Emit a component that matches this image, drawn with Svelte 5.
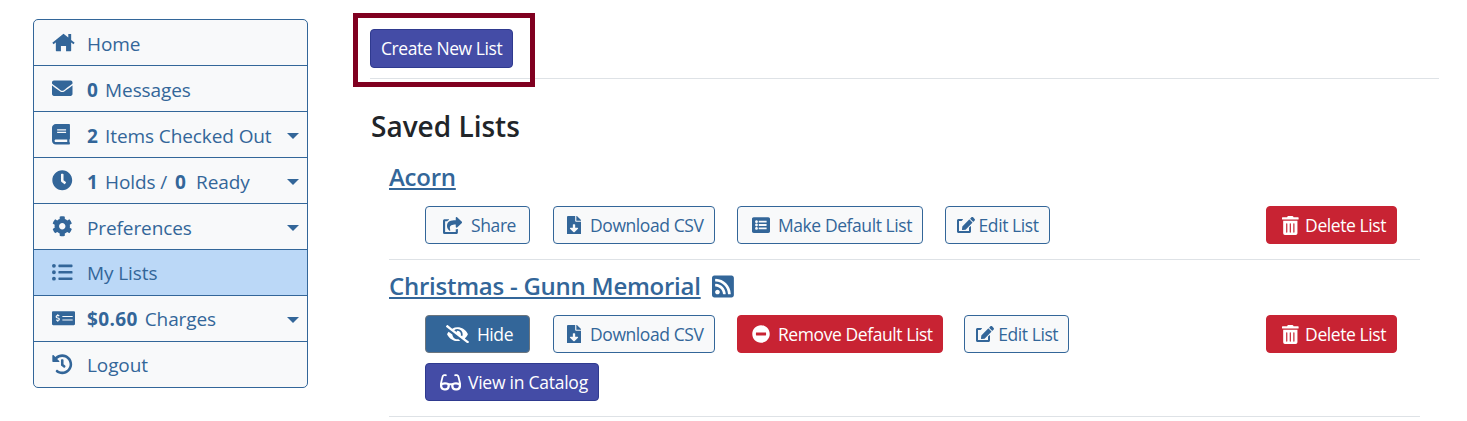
<script>
  const icons = {
    home: [576, 'M288 40L8 270l32 36L288 100l248 206 32-36-88-72V50h-72v88zM288 100L96 258v206a16 16 0 0 0 16 16h112V352h128v128h112a16 16 0 0 0 16-16V258z'],
    envelope: [512, 'M502.3 190.8c3.9-3.1 9.7-.2 9.7 4.7V400c0 26.5-21.5 48-48 48H48c-26.5 0-48-21.5-48-48V195.6c0-5 5.7-7.8 9.7-4.7 22.4 17.4 52.1 39.5 154.1 113.6 21.1 15.4 56.7 47.8 92.2 47.6 35.7.3 72-32.8 92.3-47.6 102-74.1 131.6-96.3 154-113.7zM256 320c23.2.4 56.6-29.2 73.4-41.4 132.7-96.3 142.8-104.7 173.4-128.7 5.8-4.5 9.2-11.5 9.2-18.9v-19c0-26.5-21.5-48-48-48H48C21.5 64 0 85.5 0 112v19c0 7.4 3.4 14.3 9.2 18.9 30.6 23.9 40.7 32.4 173.4 128.7 16.8 12.2 50.2 41.8 73.4 41.4z'],
    book: [448, 'M448 360V24c0-13.3-10.7-24-24-24H96C43 0 0 43 0 96v320c0 53 43 96 96 96h328c13.3 0 24-10.7 24-24v-16c0-7.5-3.5-14.3-8.9-18.7-4.2-15.4-4.2-59.3 0-74.7 5.4-4.3 8.9-11.1 8.9-18.6zM128 134c0-3.3 2.7-6 6-6h212c3.3 0 6 2.7 6 6v20c0 3.3-2.7 6-6 6H134c-3.3 0-6-2.7-6-6v-20zm0 64c0-3.3 2.7-6 6-6h212c3.3 0 6 2.7 6 6v20c0 3.3-2.7 6-6 6H134c-3.3 0-6-2.7-6-6v-20zm253.4 250H96c-17.7 0-32-14.3-32-32 0-17.6 14.4-32 32-32h285.4c-1.9 17.1-1.9 46.9 0 64z'],
    clock: [512, 'M256,8C119,8,8,119,8,256S119,504,256,504,504,393,504,256,393,8,256,8Zm92.49,313h0l-20,25a16,16,0,0,1-22.49,2.5h0l-67-49.72a40,40,0,0,1-15-31.23V112a16,16,0,0,1,16-16h32a16,16,0,0,1,16,16V256l58,42.5A16,16,0,0,1,348.49,321Z'],
    cog: [512, 'M487.4 315.7l-42.6-24.6c4.3-23.2 4.3-47 0-70.2l42.6-24.6c4.9-2.8 7.1-8.6 5.5-14-11.1-35.6-30-67.8-54.7-94.6-3.8-4.1-10-5.1-14.8-2.3L380.8 110c-17.9-15.4-38.5-27.3-60.8-35.1V25.8c0-5.6-3.9-10.5-9.4-11.7-36.7-8.2-74.3-7.8-109.2 0-5.5 1.2-9.4 6.1-9.4 11.7V75c-22.2 7.9-42.8 19.8-60.8 35.1L88.7 85.5c-4.9-2.8-11-1.9-14.8 2.3-24.7 26.7-43.6 58.9-54.7 94.6-1.7 5.4.6 11.2 5.5 14L67.3 221c-4.3 23.2-4.3 47 0 70.2l-42.6 24.6c-4.9 2.8-7.1 8.6-5.5 14 11.1 35.6 30 67.8 54.7 94.6 3.8 4.1 10 5.1 14.8 2.3l42.6-24.6c17.9 15.4 38.5 27.3 60.8 35.1v49.2c0 5.6 3.9 10.5 9.4 11.7 36.7 8.2 74.3 7.8 109.2 0 5.5-1.2 9.4-6.1 9.4-11.7v-49.2c22.2-7.9 42.8-19.8 60.8-35.1l42.6 24.6c4.9 2.8 11 1.9 14.8-2.3 24.7-26.7 43.6-58.9 54.7-94.6 1.5-5.5-.7-11.3-5.6-14.1zM256 336c-44.1 0-80-35.9-80-80s35.9-80 80-80 80 35.9 80 80-35.9 80-80 80z'],
    list: [512, 'M48 48a48 48 0 1 0 48 48 48 48 0 0 0-48-48zm0 160a48 48 0 1 0 48 48 48 48 0 0 0-48-48zm0 160a48 48 0 1 0 48 48 48 48 0 0 0-48-48zm448 16H176a16 16 0 0 0-16 16v32a16 16 0 0 0 16 16h320a16 16 0 0 0 16-16v-32a16 16 0 0 0-16-16zm0-320H176a16 16 0 0 0-16 16v32a16 16 0 0 0 16 16h320a16 16 0 0 0 16-16V80a16 16 0 0 0-16-16zm0 160H176a16 16 0 0 0-16 16v32a16 16 0 0 0 16 16h320a16 16 0 0 0 16-16v-32a16 16 0 0 0-16-16z'],
    money: [640, 'M608 64H32C14.33 64 0 78.33 0 96v320c0 17.67 14.33 32 32 32h576c17.67 0 32-14.33 32-32V96c0-17.67-14.33-32-32-32zM176 327.88V344c0 4.42-3.58 8-8 8h-16c-4.42 0-8-3.58-8-8v-16.29c-11.29-.58-22.27-4.52-31.37-11.35-3.9-2.93-4.1-8.77-.57-12.14l11.75-11.21c2.77-2.64 6.89-2.76 10.13-.73 3.87 2.42 8.26 3.72 12.82 3.72h28.11c6.5 0 11.8-5.92 11.8-13.19 0-5.95-3.61-11.19-8.77-12.73l-45-13.5c-18.59-5.58-31.58-23.42-31.58-43.39 0-24.52 19.05-44.44 42.67-45.07V152c0-4.42 3.58-8 8-8h16c4.42 0 8 3.58 8 8v16.29c11.29.58 22.27 4.51 31.37 11.35 3.9 2.93 4.1 8.77.57 12.14l-11.75 11.21c-2.77 2.64-6.89 2.76-10.13.73-3.87-2.43-8.26-3.72-12.82-3.72h-28.11c-6.5 0-11.8 5.92-11.8 13.19 0 5.95 3.61 11.19 8.77 12.73l45 13.5c18.59 5.58 31.58 23.42 31.58 43.39 0 24.53-19.05 44.44-42.67 45.07zM576 312c0 4.42-3.58 8-8 8H296c-4.42 0-8-3.58-8-8v-16c0-4.42 3.58-8 8-8h272c4.42 0 8 3.58 8 8v16zm0-96c0 4.42-3.58 8-8 8H296c-4.42 0-8-3.58-8-8v-16c0-4.42 3.58-8 8-8h272c4.42 0 8 3.58 8 8v16z'],
    history: [512, 'M504 255.531c.253 136.64-111.18 248.372-247.82 248.468-59.015.042-113.223-20.53-155.822-54.911-11.077-8.94-11.905-25.541-1.839-35.607l11.267-11.267c8.609-8.609 22.353-9.551 31.891-1.984C173.062 425.135 212.781 440 256 440c101.705 0 184-82.311 184-184 0-101.705-82.311-184-184-184-48.814 0-93.149 18.969-126.068 49.932l50.754 50.754c10.08 10.08 2.941 27.314-11.313 27.314H24c-8.837 0-16-7.163-16-16V38.627c0-14.254 17.234-21.393 27.314-11.314l49.372 49.372C129.209 34.136 189.552 8 256 8c136.81 0 247.747 110.78 248 247.531zm-180.912 78.784l9.823-12.63c8.138-10.463 6.253-25.542-4.21-33.679L288 256.349V152c0-13.255-10.745-24-24-24h-16c-13.255 0-24 10.745-24 24v135.651l65.409 50.874c10.463 8.137 25.541 6.253 33.679-4.21z'],
    share: [576, 'M568.482 177.448L424.479 313.433C409.3 327.768 384 317.14 384 295.985v-71.963c-144.575.97-205.566 35.113-164.775 171.353 4.483 14.973-12.846 26.567-25.006 17.33C155.252 383.105 120 326.488 120 269.339c0-143.937 117.599-172.5 264-173.312V24.012c0-21.174 25.317-31.768 40.479-17.448l144.003 135.988c10.02 9.463 10.028 25.425 0 34.896zM384 379.128V448H64V128h50.916a11.99 11.99 0 0 0 8.648-3.693c14.953-15.568 32.237-27.89 51.014-37.676C186.708 80.83 182.936 64 170.416 64H48C21.49 64 0 85.49 0 112v352c0 26.51 21.49 48 48 48h352c26.51 0 48-21.49 48-48v-88.806c0-8.288-8.197-14.066-16.011-11.302a71.83 71.83 0 0 1-34.189 3.377c-7.27-1.046-13.8 4.514-13.8 11.859z'],
    download: [384, 'M224 136V0H24C10.7 0 0 10.7 0 24v464c0 13.3 10.7 24 24 24h336c13.3 0 24-10.7 24-24V160H248c-13.2 0-24-10.8-24-24zm76.45 211.36l-96.42 95.7c-6.65 6.61-17.39 6.61-24.04 0l-96.42-95.7C73.42 337.29 80.54 320 94.82 320H160v-80c0-8.84 7.16-16 16-16h32c8.84 0 16 7.16 16 16v80h65.18c14.28 0 21.4 17.29 11.27 27.36zM377 105L279.1 7c-4.5-4.5-10.6-7-17-7H256v128h128v-6.1c0-6.3-2.5-12.4-7-16.9z'],
    listAlt: [512, 'M464 480H48c-26.51 0-48-21.49-48-48V80c0-26.51 21.49-48 48-48h416c26.51 0 48 21.49 48 48v352c0 26.51-21.49 48-48 48zM128 120c-22.091 0-40 17.909-40 40s17.909 40 40 40 40-17.909 40-40-17.909-40-40-40zm0 96c-22.091 0-40 17.909-40 40s17.909 40 40 40 40-17.909 40-40-17.909-40-40-40zm0 96c-22.091 0-40 17.909-40 40s17.909 40 40 40 40-17.909 40-40-17.909-40-40-40zm288-136v-32c0-6.627-5.373-12-12-12H204c-6.627 0-12 5.373-12 12v32c0 6.627 5.373 12 12 12h200c6.627 0 12-5.373 12-12zm0 96v-32c0-6.627-5.373-12-12-12H204c-6.627 0-12 5.373-12 12v32c0 6.627 5.373 12 12 12h200c6.627 0 12-5.373 12-12zm0 96v-32c0-6.627-5.373-12-12-12H204c-6.627 0-12 5.373-12 12v32c0 6.627 5.373 12 12 12h200c6.627 0 12-5.373 12-12z'],
    edit: [576, 'M402.6 83.2l90.2 90.2c3.8 3.8 3.8 10 0 13.8L274.4 405.6l-92.8 10.3c-12.4 1.4-22.9-9.1-21.5-21.5l10.3-92.8L388.8 83.2c3.8-3.8 10-3.8 13.8 0zm162-22.9l-48.8-48.8c-15.2-15.2-39.9-15.2-55.2 0l-35.4 35.4c-3.8 3.8-3.8 10 0 13.8l90.2 90.2c3.8 3.8 10 3.8 13.8 0l35.4-35.4c15.2-15.3 15.2-40 0-55.2zM384 346.2V448H64V128h73.2c3.2 0 6.2-1.3 8.5-3.5l40-40c7.6-7.6 2.2-20.5-8.5-20.5H48C21.5 64 0 85.5 0 112v352c0 26.5 21.5 48 48 48h352c26.5 0 48-21.5 48-48V306.2c0-10.7-12.9-16-20.5-8.5l-40 40c-2.2 2.3-3.5 5.3-3.5 8.5z'],
    trash: [448, 'M32 464a48 48 0 0 0 48 48h288a48 48 0 0 0 48-48V128H32zm272-256a16 16 0 0 1 32 0v224a16 16 0 0 1-32 0zm-96 0a16 16 0 0 1 32 0v224a16 16 0 0 1-32 0zm-96 0a16 16 0 0 1 32 0v224a16 16 0 0 1-32 0zM432 32H312l-9.4-18.7A24 24 0 0 0 281.1 0H166.8a23.72 23.72 0 0 0-21.4 13.3L136 32H16A16 16 0 0 0 0 48v32a16 16 0 0 0 16 16h416a16 16 0 0 0 16-16V48a16 16 0 0 0-16-16z'],
    rss: [448, 'M400 32H48C21.49 32 0 53.49 0 80v352c0 26.51 21.49 48 48 48h352c26.51 0 48-21.49 48-48V80c0-26.51-21.49-48-48-48zM112 416c-26.51 0-48-21.49-48-48s21.49-48 48-48 48 21.49 48 48-21.49 48-48 48zm157.533 0h-34.335c-6.011 0-11.051-4.636-11.442-10.634-5.214-80.05-69.243-143.92-149.123-149.123-5.997-.39-10.633-5.431-10.633-11.441v-34.335c0-6.535 5.468-11.777 11.994-11.425 110.546 5.974 198.997 94.536 204.964 204.964.352 6.526-4.89 11.994-11.425 11.994zm103.027 0h-34.334c-6.161 0-11.175-4.882-11.427-11.038-5.598-136.535-115.204-246.161-251.76-251.76C68.882 152.949 64 147.935 64 141.774V107.44c0-6.454 5.338-11.664 11.787-11.432 167.83 6.025 302.21 141.191 308.205 308.205.232 6.449-4.978 11.787-11.432 11.787z'],
    minus: [512, 'M256 8C119 8 8 119 8 256s111 248 248 248 248-111 248-248S393 8 256 8zM124 296c-6.6 0-12-5.4-12-12v-56c0-6.6 5.4-12 12-12h264c6.6 0 12 5.4 12 12v56c0 6.6-5.4 12-12 12H124z'],
    eyeSlash: [640, 'M320 400c-75.85 0-137.25-58.71-142.9-133.11L72.2 185.82c-13.79 17.3-26.48 35.59-36.72 55.59a32.35 32.35 0 0 0 0 29.19C89.71 376.41 197.07 448 320 448c26.91 0 52.87-4 77.89-10.46L346 397.39a144.13 144.13 0 0 1-26 2.61zm313.82 58.1l-110.55-85.44a331.25 331.25 0 0 0 81.25-102.07 32.35 32.35 0 0 0 0-29.19C550.29 135.59 442.93 64 320 64a308.15 308.15 0 0 0-147.32 37.7L45.46 3.37A16 16 0 0 0 23 6.18L3.37 31.45A16 16 0 0 0 6.18 53.9l588.36 454.73a16 16 0 0 0 22.46-2.81l19.64-25.27a16 16 0 0 0-2.82-22.45zm-183.72-142l-39.3-30.38A94.75 94.75 0 0 0 416 256a94.76 94.76 0 0 0-121.31-92.21A47.65 47.65 0 0 1 304 192a46.64 46.64 0 0 1-1.54 10l-73.61-56.89A142.31 142.31 0 0 1 320 112a143.92 143.92 0 0 1 144 144c0 21.63-5.29 41.79-13.9 60.11z'],
    glasses: [576, 'M574.1 280.37L528.75 98.66c-5.91-23.7-21.59-44.05-43-55.81-21.44-11.73-46.97-14.11-70.19-6.33l-15.25 5.08c-8.39 2.79-12.92 11.86-10.12 20.24l5.06 15.18c2.79 8.38 11.85 12.91 20.23 10.12l13.18-4.39c10.87-3.62 23-3.57 33.16 1.73 10.29 5.37 17.57 14.56 20.37 25.82l38.46 153.82c-22.19-6.81-49.79-12.46-81.2-12.46-34.77 0-73.98 7.02-114.85 26.74h-73.18c-40.87-19.74-80.08-26.75-114.86-26.75-31.42 0-59.02 5.65-81.21 12.46l38.46-153.82c2.79-11.25 10.09-20.45 20.38-25.81 10.16-5.3 22.28-5.35 33.15-1.73l13.17 4.39c8.38 2.79 17.44-1.74 20.23-10.12l5.06-15.18c2.8-8.38-1.73-17.45-10.12-20.24l-15.25-5.08c-23.22-7.78-48.75-5.41-70.19 6.33-21.41 11.77-37.09 32.11-43 55.8L1.9 280.37A64.218 64.218 0 0 0 0 295.86v70.25C0 429.01 51.58 480 115.2 480h37.12c60.28 0 110.37-45.94 114.88-105.37l2.93-38.63h35.75l2.93 38.63C313.31 434.06 363.4 480 423.68 480h37.12c63.62 0 115.2-50.99 115.2-113.88v-70.25c0-5.23-.64-10.43-1.9-15.5zm-370.72 89.42c-1.97 25.91-24.4 46.21-51.06 46.21H115.2C86.97 416 64 393.62 64 366.11v-37.54c18.12-6.49 43.42-12.92 72.58-12.92 23.86 0 47.26 4.33 69.93 12.92l-3.13 41.22zM512 366.12c0 27.51-22.97 49.88-51.2 49.88h-37.12c-26.67 0-49.1-20.3-51.06-46.21l-3.13-41.22c22.67-8.59 46.08-12.92 69.95-12.92 29.12 0 54.43 6.44 72.55 12.93v37.54z']
  };

  const menu = [
    { icon: 'home', label: 'Home' },
    { icon: 'envelope', bold: '0', label: 'Messages' },
    { icon: 'book', bold: '2', label: 'Items Checked Out', caret: true },
    { icon: 'clock', bold: '1', label: 'Holds /', bold2: '0', label2: 'Ready', caret: true },
    { icon: 'cog', label: 'Preferences', caret: true },
    { icon: 'list', label: 'My Lists', active: true },
    { icon: 'money', bold: '$0.60', label: 'Charges', caret: true },
    { icon: 'history', label: 'Logout' }
  ];

  const lists = [
    {
      name: 'Acorn',
      buttons: [
        { icon: 'share', label: 'Share', kind: 'outline', wide: true },
        { icon: 'download', label: 'Download CSV', kind: 'outline' },
        { icon: 'listAlt', label: 'Make Default List', kind: 'outline' },
        { icon: 'edit', label: 'Edit List', kind: 'outline' }
      ]
    },
    {
      name: 'Christmas - Gunn Memorial',
      rss: true,
      buttons: [
        { icon: 'eyeSlash', label: 'Hide', kind: 'solid', wide: true },
        { icon: 'download', label: 'Download CSV', kind: 'outline' },
        { icon: 'minus', label: 'Remove Default List', kind: 'danger' },
        { icon: 'edit', label: 'Edit List', kind: 'outline' }
      ],
      extra: { icon: 'glasses', label: 'View in Catalog', kind: 'primary' }
    }
  ];
</script>

{#snippet icon(name, cls)}
  <svg class={cls} viewBox="0 0 {icons[name][0]} 512" aria-hidden="true"><path fill="currentColor" d={icons[name][1]} /></svg>
{/snippet}

{#snippet btn(b)}
  <button type="button" class="btn {b.kind}" class:wide={b.wide}>
    {@render icon(b.icon, `btn-icon i-${b.icon}`)}
    <span>{b.label}</span>
  </button>
{/snippet}

<div class="page">
  <nav class="sidebar">
    {#each menu as item}
      <a href="#top" class="item" class:active={item.active}>
        <span class="item-icon">{@render icon(item.icon, 'menu-icon')}</span>
        <span class="item-text">
          {#if item.bold}<b>{item.bold}</b>{/if}
          {item.label}
          {#if item.bold2}<b class="second">{item.bold2}</b>&nbsp; {item.label2}{/if}
        </span>
        {#if item.caret}<span class="caret"></span>{/if}
      </a>
    {/each}
  </nav>

  <main class="content">
    <div class="toolbar">
      <button type="button" class="btn primary create">Create New List</button>
      <span class="callout"></span>
    </div>

    <h2>Saved Lists</h2>

    {#each lists as list}
      <section class="list">
        <h3>
          <a href="#top">{list.name}</a>
          {#if list.rss}{@render icon('rss', 'rss')}{/if}
        </h3>
        <div class="actions">
          {#each list.buttons as b}
            {@render btn(b)}
          {/each}
          <button type="button" class="btn danger delete">
            {@render icon('trash', 'btn-icon i-trash')}
            <span>Delete List</span>
          </button>
        </div>
        {#if list.extra}
          <div class="actions extra">{@render btn(list.extra)}</div>
        {/if}
      </section>
    {/each}
  </main>
</div>

<style>
  :global(body) {
    margin: 0;
    background: #fff;
    font-family: "Open Sans", "Noto Sans", sans-serif;
    color: #212529;
  }

  .page {
    display: flex;
    align-items: flex-start;
    padding: 19px 28px 0 33px;
  }

  .sidebar {
    width: 275px;
    flex-shrink: 0;
    box-sizing: border-box;
    border: 1px solid #336699;
    border-radius: 5px;
    background: #f8f9fa;
    overflow: hidden;
  }

  .item {
    display: flex;
    align-items: center;
    height: 45px;
    padding: 0 8px 0 18px;
    color: #336699;
    font-size: 19px;
    letter-spacing: -0.1px;
    text-decoration: none;
    border-bottom: 1px solid #336699;
  }

  .item:last-child {
    border-bottom: none;
  }

  .item:nth-child(-n + 5) .item-text {
    padding-top: 2px;
  }

  .item.active {
    background: #bbd8f7;
  }

  .item-icon {
    width: 35px;
    flex-shrink: 0;
    display: flex;
  }

  .menu-icon {
    height: 20.5px;
    width: auto;
    max-width: 23px;
  }

  .item-text {
    flex: 1;
  }

  .item-text b {
    margin-right: 2px;
    letter-spacing: 0.4px;
  }

  .item-text b.second {
    margin: 0 0 0 3px;
  }

  .caret {
    width: 0;
    height: 0;
    border-left: 6px solid transparent;
    border-right: 6px solid transparent;
    border-top: 6px solid #336699;
    margin-top: 3px;
  }

  .content {
    flex: 1;
    margin-left: 62px;
  }

  .toolbar {
    position: relative;
    padding: 10px 0 10px;
    border-bottom: 1px solid #dee2e6;
  }

  .callout {
    position: absolute;
    left: -17px;
    top: -6px;
    width: 172px;
    height: 64px;
    border: 5px solid #800020;
  }

  h2 {
    margin: 27px 0 0;
    padding: 0 0 5px 1px;
    font-size: 28px;
    line-height: 40px;
    font-weight: 600;
  }

  .list {
    margin: 0 19px;
    padding-bottom: 15px;
    border-bottom: 1px solid #dee2e6;
  }

  h3 {
    margin: 9px 0 12px;
    font-size: 24px;
    line-height: 34px;
    font-weight: 600;
    letter-spacing: -0.25px;
    display: flex;
    align-items: center;
    gap: 11px;
  }

  h3 a {
    color: #336699;
  }

  .rss {
    height: 25px;
    color: #336699;
  }

  .actions {
    display: flex;
    gap: 21.5px;
    margin-left: 36px;
    margin-right: 23px;
  }

  .extra {
    margin-top: 10px;
  }

  .btn {
    display: inline-flex;
    align-items: center;
    justify-content: center;
    box-sizing: border-box;
    height: 39px;
    padding: 0 10px;
    border: 1px solid transparent;
    border-radius: 4px;
    font: inherit;
    font-size: 17.5px;
    letter-spacing: -0.42px;
    white-space: nowrap;
  }

  .create {
    padding-bottom: 2px;
  }

  .actions .btn {
    height: 38px;
  }

  .btn.wide {
    width: 105px;
    padding-left: 14px;
    margin-right: 1.5px;
  }

  .btn-icon {
    height: 18px;
    width: auto;
  }

  .i-share {
    height: 17px;
    margin-right: 9px;
  }

  .i-eyeSlash {
    height: 18.4px;
    margin-right: 8px;
  }

  .i-download {
    height: 18.7px;
    margin: 0 9px 0 3px;
  }

  .i-download + span {
    margin-right: 1px;
  }

  .i-listAlt {
    margin: 0 8px 0 4px;
  }

  .i-edit {
    height: 16px;
    margin: 0 4px 0 1px;
  }

  .i-trash {
    height: 19px;
    margin: 0 6px 0 5px;
  }

  .i-minus {
    margin: 0 8px 0 4px;
  }

  .i-minus + span {
    margin-right: -1px;
  }

  .i-glasses {
    height: 18.7px;
    margin: 0 7px 0 4px;
  }

  .i-glasses + span {
    letter-spacing: -0.25px;
  }

  .outline {
    background: #f8f9fa;
    border-color: #336699;
    color: #336699;
  }

  .solid {
    background: #336699;
    border-color: #6c757d;
    color: #fff;
  }

  .primary {
    background: #444ca6;
    border-color: #2f3a8f;
    color: #fff;
  }

  .danger {
    background: #c82333;
    border-color: #c82333;
    color: #fff;
  }

  .delete {
    margin-left: auto;
  }
</style>
